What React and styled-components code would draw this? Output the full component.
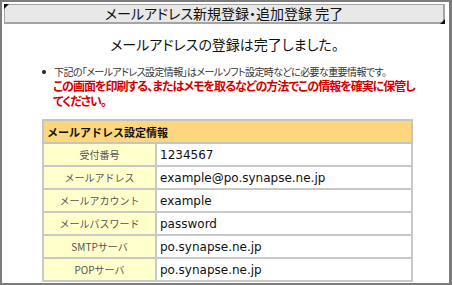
import React from 'react'
import styled, { createGlobalStyle } from 'styled-components'

const GlobalStyle = createGlobalStyle`
  html, body {
    margin: 0;
    padding: 0;
    background: #ffffff;
  }
  body {
    font-family: "Noto Sans CJK JP", "DejaVu Sans", sans-serif;
  }
`

const Frame = styled.div`
  width: 452px;
  height: 285px;
  box-sizing: border-box;
  border-style: solid;
  border-color: #7c7c7c;
  border-width: 2px 3px 2px 2px;
  padding: 2px 4px 0 2px;
  display: flex;
  flex-direction: column;
  overflow: hidden;
`

const TitleBar = styled.div`
  position: relative;
  height: 20px;
  box-sizing: border-box;
  background: #e8e8e8;
  border: 1px solid #a4a4a4;
  border-right-width: 2px;
  border-bottom-width: 2px;
  display: flex;
  align-items: center;
  justify-content: center;
  font-size: 14px;
  line-height: 17px;
  color: #111;
  font-feature-settings: "palt";
  &::before, &::after {
    content: '';
    position: absolute;
    width: 0;
    height: 0;
  }
  &::before {
    top: -1px;
    left: -1px;
    border-top: 5px solid #111;
    border-right: 5px solid transparent;
  }
  &::after {
    right: -2px;
    bottom: -2px;
    border-bottom: 5px solid #111;
    border-left: 5px solid transparent;
  }
`

const Heading = styled.h1`
  margin: 10px 0 0;
  font-size: 14px;
  font-weight: normal;
  line-height: 20px;
  text-align: center;
  color: #111;
  font-feature-settings: "palt";
`

const Notice = styled.div`
  display: flex;
  align-items: flex-start;
  margin: 11px 0 0 38px;
`

const Dot = styled.span`
  width: 4px;
  height: 4px;
  border-radius: 50%;
  background: #222;
  margin: 5px 8px 0 0;
  flex-shrink: 0;
`

const NoticeText = styled.div`
  display: flex;
  flex-direction: column;
  font-feature-settings: "palt";
`

const Note = styled.p`
  margin: 0;
  font-size: 10px;
  line-height: 13px;
  letter-spacing: -0.6px;
  color: #333;
`

const Warning = styled.p`
  margin: 0 0 0 -1px;
  font-size: 12px;
  font-weight: bold;
  line-height: 15px;
  letter-spacing: -1px;
  color: #d40000;
  width: 364px;
`

const Table = styled.table`
  margin: 11px 0 0 38px;
  width: 371px;
  border-collapse: collapse;
  border: 2px solid #c4c4c4;
`

const HeadCell = styled.th`
  height: 23px;
  box-sizing: border-box;
  padding: 0 0 0 3px;
  background: #fdd77e;
  border: 2px solid #c4c4c4;
  text-align: left;
  font-size: 11px;
  font-weight: bold;
  color: #111;
`

const Label = styled.td`
  width: 113px;
  height: 23px;
  box-sizing: border-box;
  padding: 0;
  background: #ffffcc;
  border: 2px solid #c8c8c8;
  text-align: center;
  font-size: 10px;
  color: #555;
`

const Value = styled.td`
  height: 23px;
  box-sizing: border-box;
  padding: 0 0 0 3px;
  background: #ffffff;
  border: 2px solid #c8c8c8;
  font-family: "DejaVu Sans", sans-serif;
  font-size: 12px;
  color: #111;
`

const rows = [
  ['受付番号', '1234567'],
  ['メールアドレス', 'example@po.synapse.ne.jp'],
  ['メールアカウント', 'example'],
  ['メールパスワード', 'password'],
  ['SMTPサーバ', 'po.synapse.ne.jp'],
  ['POPサーバ', 'po.synapse.ne.jp'],
]

export default function App() {
  return (
    <>
      <GlobalStyle />
      <Frame>
        <TitleBar>メールアドレス新規登録・追加登録 完了</TitleBar>
        <Heading>メールアドレスの登録は完了しました。</Heading>
        <Notice>
          <Dot />
          <NoticeText>
            <Note>下記の「メールアドレス設定情報」はメールソフト設定時などに必要な重要情報です。</Note>
            <Warning>この画面を印刷する、またはメモを取るなどの方法でこの情報を確実に保管してください。</Warning>
          </NoticeText>
        </Notice>
        <Table>
          <tbody>
            <tr>
              <HeadCell colSpan={2}>メールアドレス設定情報</HeadCell>
            </tr>
            {rows.map(([label, value]) => (
              <tr key={label}>
                <Label>{label}</Label>
                <Value>{value}</Value>
              </tr>
            ))}
          </tbody>
        </Table>
      </Frame>
    </>
  )
}
